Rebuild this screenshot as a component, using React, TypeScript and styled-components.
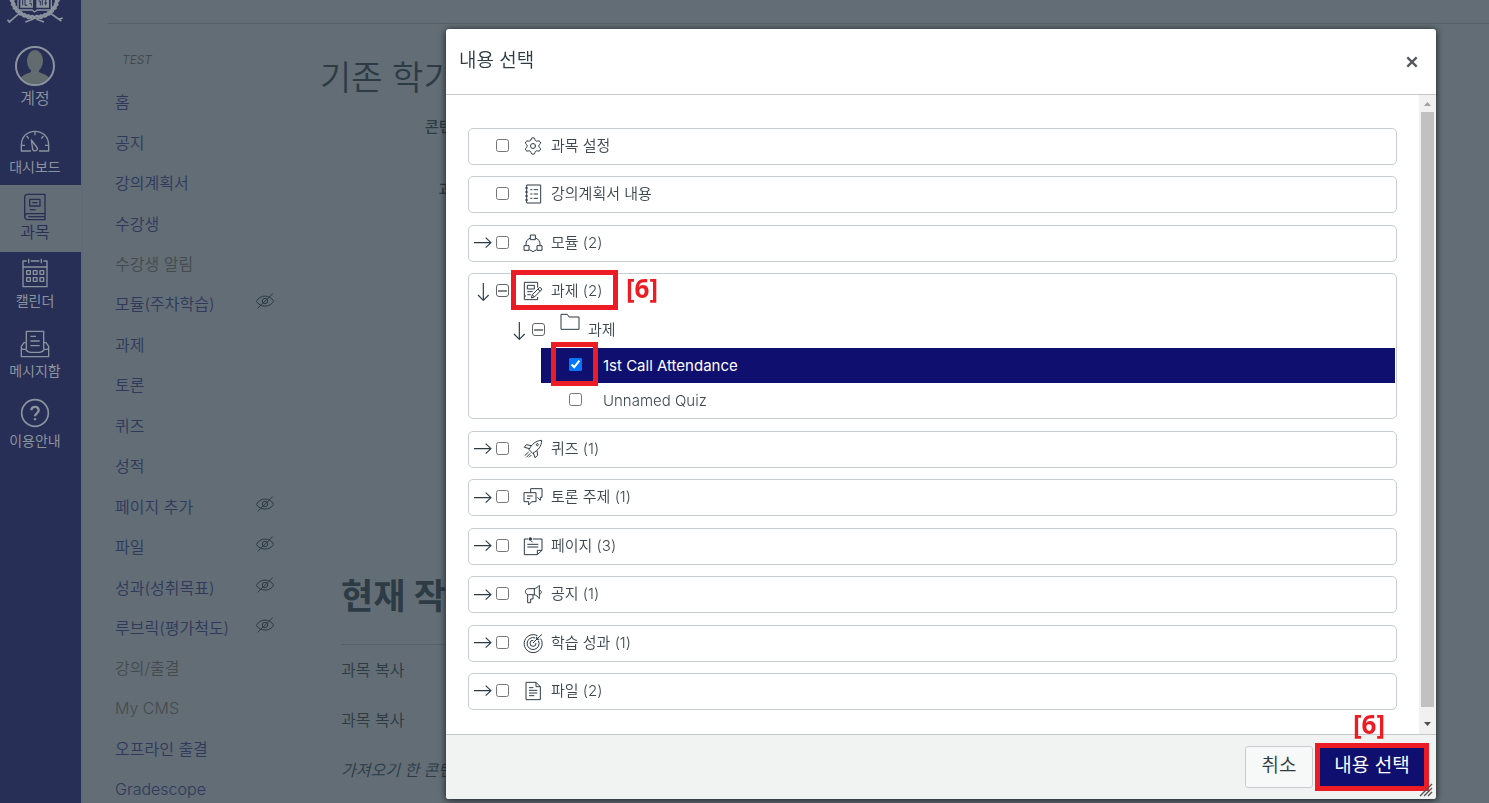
import React, { useEffect, useRef, useState } from 'react';
import styled, { createGlobalStyle, css } from 'styled-components';
import { Settings } from 'lucide-react';

const SANS = `Inter, "Noto Sans CJK KR", sans-serif`;

const color = {
  dim: '#626d75',
  navy: '#272f57',
  navIcon: '#8b949d',
  ink: '#2d3b45',
  link: '#2e395c',
  muted: '#444b4e',
  line: '#c7cdd1',
  primary: '#0f0f70',
  mark: '#ed1c24',
};

const GlobalStyle = createGlobalStyle`
  *, *::before, *::after { box-sizing: border-box; }
  body {
    margin: 0;
    background: ${color.dim};
    font-family: ${SANS};
    font-size: 16px;
    font-weight: 350;
    color: ${color.ink};
  }
  ul, h1, h2, p { margin: 0; padding: 0; list-style: none; }
  a { color: inherit; text-decoration: none; }
`;

/* ---------- icons ---------- */

type GlyphProps = { w: number; h: number; sw?: number; children: React.ReactNode };

/* Icons are drawn on a grid three times finer than their display size. */
const Glyph = ({ w, h, sw = 3, children }: GlyphProps) => (
  <svg
    width={w}
    height={h}
    viewBox={`0 0 ${w * 3} ${h * 3}`}
    fill="none"
    stroke="currentColor"
    strokeWidth={sw}
    strokeLinejoin="round"
    aria-hidden="true"
  >
    {children}
  </svg>
);

const ArrowRight = () => (
  <Glyph w={20} h={12} sw={3.5}>
    <path d="M3 17H54M38 2L54 17L38 32" />
  </Glyph>
);
const ArrowDown = () => (
  <Glyph w={20} h={20} sw={3.5}>
    <path d="M31 3V55M15 39L31 55L47 39" />
  </Glyph>
);
const SyllabusIcon = () => (
  <Glyph w={20} h={20}>
    <path d="M11 3H53V57H11ZM6 12H15M6 24H15M6 36H15M6 48H15" />
    <path d="M22 17H28M22 30H28M22 43H28M32 17H45M32 30H45M32 43H45" />
  </Glyph>
);
const ModuleIcon = () => (
  <Glyph w={20} h={20}>
    <path d="M22 6H37V20H22ZM3 38H18V52H3ZM42 38H57V52H42Z" />
    <path d="M22 15C13 18 8 26 9 37M37 15C47 18 52 26 51 37M19 50L30 56L41 50" />
  </Glyph>
);
const AssignmentIcon = () => (
  <Glyph w={20} h={20}>
    <path d="M44 20V4H4V56H44V48M4 45H9" />
    <path d="M13 13H34V24H13ZM13 32H29M13 41H23" />
    <path d="M28 41L49 20C52 18 58 23 55 27L34 48L25 51ZM45 24L51 31M28 41L34 48" />
  </Glyph>
);
const FolderIcon = () => (
  <Glyph w={20} h={18}>
    <path d="M3 49V4H22L27 12H57V49Z" />
  </Glyph>
);
const QuizIcon = () => (
  <Glyph w={20} h={20}>
    <path d="M18 32C26 16 38 5 56 4C56 21 46 34 29 43Z" />
    <path d="M25 20L10 17L4 25L20 29M42 35L44 49L36 56L31 42" />
    <circle cx="43" cy="17" r="3" />
    <path d="M17 39L5 50M22 43L10 55M25 48L18 55" />
  </Glyph>
);
const DiscussionIcon = () => (
  <Glyph w={20} h={20}>
    <path d="M23 17V5H57V31H52V40L43 31" />
    <path d="M3 17H39V44H26L17 54V44H3ZM12 27H29M12 35H22" />
  </Glyph>
);
const PageIcon = () => (
  <Glyph w={20} h={20}>
    <path d="M16 9H4V56H43L57 43V9H29M43 56V43H57" />
    <path d="M13 25H46M13 33H46M24 14L29 19" />
    <circle cx="22" cy="9" r="5" fill="currentColor" stroke="none" />
  </Glyph>
);
const AnnouncementIcon = () => (
  <Glyph w={20} h={20}>
    <path d="M17 14H33C40 13 45 9 49 4V44C45 39 40 33 33 32H17C4 32 4 14 17 14Z" />
    <path d="M34 14V32M14 32V56H23V45H30V33M49 18C57 20 57 29 49 31" />
  </Glyph>
);
const OutcomeIcon = () => (
  <Glyph w={20} h={20}>
    <path d="M43 8A27 27 0 1 0 53 17" />
    <path d="M37 15A18 18 0 1 0 46 23" />
    <path d="M31 22A9 9 0 1 0 39 30" />
    <path d="M30 30L49 11M57 4L49 11M41 11V19H49M41 19L49 11" />
  </Glyph>
);
const FileIcon = () => (
  <Glyph w={20} h={20}>
    <path d="M9 4H39L52 17V56H9ZM39 4V17H52" />
    <path d="M18 20H31M18 28H43M18 36H43M18 44H34" />
  </Glyph>
);
const HiddenIcon = () => (
  <Glyph w={18} h={16}>
    <path d="M1 25C12 4 42 4 53 25C42 44 12 44 1 25Z" />
    <circle cx="27" cy="24" r="8" />
    <path d="M50 2L5 46" />
  </Glyph>
);

/* Laurel leaves sit on an arc around the open book. */
const leaves = Array.from({ length: 17 }, (_, i) => 2 + i * 11);

const Crest = () => (
  <svg width="58" height="24" viewBox="0 0 174 72" fill="none" stroke={color.navIcon} aria-hidden="true">
    {leaves.map((deg) => {
      const rad = (deg * Math.PI) / 180;
      const x = Math.round(86 + 68 * Math.cos(rad));
      const y = Math.round(-6 + 58 * Math.sin(rad));
      const lean = deg < 90 ? 38 : -38;
      return (
        <g key={deg} fill={color.navIcon} stroke="none">
          <ellipse cx={x} cy={y} rx="11" ry="4" transform={`rotate(${deg + 90 + lean} ${x} ${y})`} />
          <ellipse cx={x} cy={y} rx="9" ry="3" transform={`rotate(${deg + 90 - lean} ${x} ${y})`} />
        </g>
      );
    })}
    <path d="M36 -2V30H78L86 36L94 30H136V-2" strokeWidth="4" fill={color.navy} />
    <path d="M43 -2H81V23H43ZM91 -2H129V23H91Z" stroke="none" fill={color.navIcon} />
    <path d="M50 0V16M57 0V16H64M70 3H76M70 10H76V17M97 3H103V16M109 0V16M115 9H123M119 0V16" strokeWidth="3" stroke={color.navy} />
    <path d="M8 68L44 36M128 36L166 63M4 60L14 66M158 58L170 54" strokeWidth="5" />
    <path d="M58 66L80 58M92 58L114 66" strokeWidth="5" />
  </svg>
);
const AvatarIcon = () => (
  <svg width="42" height="42" viewBox="0 0 42 42" aria-hidden="true">
    <clipPath id="avatar"><circle cx="21" cy="21" r="18" /></clipPath>
    <g clipPath="url(#avatar)" fill="#626b6e">
      <ellipse cx="21" cy="16" rx="8" ry="11" />
      <path d="M3 42C3 31 13 29 17 27V22H25V27C29 29 39 31 39 42Z" />
    </g>
    <circle cx="21" cy="21" r="19" fill="none" stroke={color.navIcon} strokeWidth="2" />
  </svg>
);
const DashboardIcon = () => (
  <Glyph w={30} h={24} sw={4}>
    <path d="M33 63H4V46C4 20 22 4 45 4C68 4 86 20 86 46V63H57" />
    <path d="M34 30L38 58C42 66 54 62 52 54ZM45 5V16M20 18L26 26M70 18L64 26M5 46H15M75 46H85" />
  </Glyph>
);
const CourseIcon = () => (
  <Glyph w={24} h={28} sw={4}>
    <path d="M66 62V4H14C8 4 5 8 5 14V70C5 76 8 80 14 80H66V62H14C8 62 5 65 5 71M66 71H16" />
    <path d="M20 19H51V39H20ZM28 29H43M20 50H38" />
  </Glyph>
);
const CalendarIcon = () => (
  <Glyph w={26} h={30} sw={4}>
    <path d="M14 9H3V86H75V9H64M26 9H52M3 27H75M20 2V16M58 2V16" />
    <path d="M14 38H25V49H14ZM34 38H45V49H34ZM54 38H65V49H54ZM14 59H25V70H14ZM34 59H45V70H34ZM54 59H65V70H54Z" />
  </Glyph>
);
const InboxIcon = () => (
  <Glyph w={30} h={28} sw={4}>
    <path d="M19 58V4H71V58M31 19H48M31 33H59M31 47H59" />
    <path d="M19 38H12L4 49V80H86V49L78 38H71M4 52C4 58 8 58 17 58C21 64 26 67 32 67H58C64 67 69 64 73 58C82 58 86 58 86 52" />
  </Glyph>
);
const HelpIcon = () => (
  <Glyph w={30} h={30} sw={5}>
    <circle cx="45" cy="45" r="40" />
    <path d="M34 37C34 23 56 23 56 37C56 46 45 46 45 55M45 61V67" strokeWidth={7} />
  </Glyph>
);

/* ---------- page behind the dialog ---------- */

const Shell = styled.div`
  display: flex;
  height: 100vh;
  overflow: hidden;
`;

const GlobalNav = styled.nav`
  flex: 0 0 81px;
  background: ${color.navy};
`;

const Brand = styled.a`
  display: block;
  height: 36px;
  padding-left: 6px;
`;

const NavLink = styled.a<{ $active?: boolean; $height: number; $large?: boolean }>`
  display: flex;
  flex-direction: column;
  align-items: center;
  justify-content: flex-end;
  height: ${(p) => p.$height}px;
  padding: 0 11px ${(p) => (p.$large ? 10 : 8)}px 0;
  gap: ${(p) => (p.$large ? 1 : 3)}px;
  color: ${(p) => (p.$active ? color.navy : color.navIcon)};
  background: ${(p) => (p.$active ? color.dim : 'transparent')};
  font-size: ${(p) => (p.$large ? 16 : 14)}px;
  font-weight: ${(p) => (p.$large ? 350 : 400)};
  line-height: 20px;
  white-space: nowrap;
`;

const Page = styled.div`
  flex: 1;
  min-width: 0;
  border-left: 2px solid #5f6b7a;
`;

const TopRule = styled.header`
  height: 24px;
  margin-left: 25px;
  border-bottom: 1px solid #54606b;
`;

const Columns = styled.div`
  display: flex;
`;

const CourseNav = styled.nav`
  flex: 0 0 237px;
  padding: 0 46px 0 32px;
`;

const Term = styled.p`
  padding: 26px 7px 11px;
  font-size: 12px;
  font-style: italic;
  line-height: 20px;
  color: #3c4347;
`;

const CourseList = styled.ul`
  display: grid;
  grid-auto-rows: 1fr;
  min-height: 728px;
`;

const CourseItem = styled.li<{ $muted?: boolean }>`
  display: flex;
  align-items: center;
  justify-content: space-between;
  white-space: nowrap;
  color: ${(p) => (p.$muted ? color.muted : color.link)};

  svg { flex: none; margin-bottom: 4px; color: ${color.ink}; }
`;

const Main = styled.main`
  flex: 1;
  min-width: 0;
  padding-top: 30px;
`;

const Title = styled.h1`
  font-size: 34px;
  font-weight: 350;
  line-height: 48px;
  white-space: nowrap;
`;

const Form = styled.div`
  display: flex;
  flex-direction: column;
  gap: 43px;
  min-height: 470px;
  padding-top: 15px;
`;

const FieldName = styled.span`
  width: 178px;
  font-size: 15px;
  font-weight: 500;
  line-height: 20px;
  text-align: right;
`;

const Jobs = styled.section`
  margin: 0 72px 0 21px;
  white-space: nowrap;
`;

const JobsTitle = styled.h2`
  padding-bottom: 24px;
  border-bottom: 1px solid #54606b;
  font-size: 35px;
  font-weight: 700;
  line-height: 48px;
`;

const Job = styled.li<{ $note?: boolean }>`
  line-height: 50px;
  font-style: ${(p) => (p.$note ? 'italic' : 'normal')};
`;

/* ---------- dialog ---------- */

const Dialog = styled.div`
  position: fixed;
  inset: 29px 53px 4px 446px;
  display: flex;
  flex-direction: column;
  border-radius: 3px;
  background: #fff;
  box-shadow: 0 1px 7px rgba(0, 0, 0, 0.75);
`;

const DialogHead = styled.div`
  display: flex;
  align-items: center;
  justify-content: space-between;
  height: 66px;
  padding: 0 16px 2px 13px;
  border-bottom: 1px solid #c6c9cb;
`;

const DialogTitle = styled.h2`
  font-size: 19px;
  font-weight: 350;
  line-height: 24px;
`;

const CloseButton = styled.button`
  display: flex;
  padding: 2px;
  margin-top: 2px;
  border: 0;
  background: none;
  color: #55595c;
`;

const DialogBody = styled.div`
  display: flex;
  flex: 1;
  min-height: 0;
`;

const Tree = styled.ul`
  display: flex;
  flex: 1;
  flex-direction: column;
  justify-content: space-between;
  margin: 33px 22px 24px;
`;

const Card = styled.li`
  border: 1px solid ${color.line};
  border-radius: 5px;
  font-size: 15px;
  color: #3d474f;
`;

const Row = styled.div<{ $level?: number }>`
  position: relative;
  display: flex;
  align-items: center;
  height: ${(p) => (p.$level ? 39 : 35)}px;
  padding-left: ${(p) => (p.$level ? 40 : 4)}px;
  padding-top: ${(p) => (p.$level ? 4 : 0)}px;
`;

const Toggle = styled.button`
  display: flex;
  width: 20px;
  padding: 0;
  margin-right: 3px;
  border: 0;
  background: none;
  color: ${color.ink};
`;

const Spacer = styled.span`
  width: 23px;
`;

const Check = styled.input`
  flex: none;
  width: 13px;
  height: 13px;
  margin: 0 0 2px;

  ${(p) =>
    p['aria-checked'] === 'mixed' &&
    css`
      display: grid;
      place-items: center;
      appearance: none;
      border: 1px solid #606468;
      border-radius: 3px;

      &::after {
        content: '';
        width: 9px;
        height: 2px;
        background: #85888b;
      }
    `}
`;

const RowLabel = styled.label`
  display: flex;
  align-items: center;
  gap: 8px;
  margin-left: 14px;
  padding-bottom: 1px;
  line-height: 20px;
  white-space: nowrap;

  svg { flex: none; color: ${color.ink}; }
`;

const FolderLabel = styled(RowLabel)`
  margin-left: 15px;

  svg { margin-bottom: 16px; }
`;

const Leaf = styled.li<{ $selected?: boolean }>`
  position: relative;
  display: flex;
  align-items: center;
  gap: 21px;
  height: 35px;
  margin: 0 1px 0 72px;
  padding-left: 28px;
  background: ${(p) => (p.$selected ? color.primary : 'transparent')};
  color: ${(p) => (p.$selected ? '#fff' : 'inherit')};
  font-weight: ${(p) => (p.$selected ? 400 : 350)};
`;

/* Red marks that point out the steps of the guide. */
const Callout = styled.span`
  position: absolute;
  inset: -4px;
  border: 5px solid ${color.mark};
  pointer-events: none;
`;

const CheckCallout = styled(Callout)`
  inset: -6px auto -3px 10px;
  width: 47px;
`;

const AssignmentCallout = styled(Callout)`
  inset: -4px auto -1px 42px;
  width: 107px;
`;

const Step = styled.span`
  position: absolute;
  top: 0;
  left: 157px;
  font-family: "Noto Sans", sans-serif;
  font-size: 26px;
  font-weight: 700;
  line-height: 28px;
  color: ${color.mark};
`;

const ButtonStep = styled(Step)`
  top: -37px;
  left: 34px;
`;

const ScrollTrack = styled.div`
  display: flex;
  flex-direction: column;
  align-items: center;
  width: 17px;
  background: #f1f1f1;
`;

const ScrollThumb = styled.div`
  flex: 1;
  width: 13px;
  margin-bottom: 10px;
  background: #c1c1c1;
`;

const ScrollArrow = styled.svg`
  display: block;
  width: 17px;
  height: 17px;
`;

const DialogFoot = styled.div`
  position: relative;
  display: flex;
  justify-content: flex-end;
  gap: 5px;
  height: 65px;
  padding: 11px 10px;
  border-top: 1px solid #c6c9cb;
  border-radius: 0 0 3px 3px;
  background: #f1f2f2;
`;

const Button = styled.button<{ $primary?: boolean }>`
  position: relative;
  width: ${(p) => (p.$primary ? 108 : 68)}px;
  height: 42px;
  padding: 0 0 7px;
  border: 1px solid ${(p) => (p.$primary ? color.primary : color.line)};
  border-radius: 3px;
  background: ${(p) => (p.$primary ? color.primary : '#f7f8f8')};
  color: ${(p) => (p.$primary ? '#fff' : color.ink)};
  font-family: inherit;
  font-size: 19px;
  font-weight: ${(p) => (p.$primary ? 400 : 350)};
  white-space: nowrap;
`;

const Grip = styled.svg`
  position: absolute;
  right: 3px;
  bottom: 2px;
`;

const courseMenu = [
  { text: '홈' },
  { text: '공지' },
  { text: '강의계획서' },
  { text: '수강생' },
  { text: '수강생 알림', muted: true },
  { text: '모듈(주차학습)', hidden: true },
  { text: '과제' },
  { text: '토론' },
  { text: '퀴즈' },
  { text: '성적' },
  { text: '페이지 추가', hidden: true },
  { text: '파일', hidden: true },
  { text: '성과(성취목표)', hidden: true },
  { text: '루브릭(평가척도)', hidden: true },
  { text: '강의/출결', muted: true },
  { text: 'My CMS', muted: true },
  { text: '오프라인 출결' },
  { text: 'Gradescope' },
];

const content = [
  { id: 'settings', text: '과목 설정', icon: <Settings size={20} strokeWidth={1.2} />, leaf: true },
  { id: 'syllabus', text: '강의계획서 내용', icon: <SyllabusIcon />, leaf: true },
  { id: 'modules', text: '모듈 (2)', icon: <ModuleIcon /> },
  { id: 'assignments', text: '과제 (2)', icon: <AssignmentIcon />, open: true },
  { id: 'quizzes', text: '퀴즈 (1)', icon: <QuizIcon /> },
  { id: 'discussions', text: '토론 주제 (1)', icon: <DiscussionIcon /> },
  { id: 'pages', text: '페이지 (3)', icon: <PageIcon /> },
  { id: 'announcements', text: '공지 (1)', icon: <AnnouncementIcon /> },
  { id: 'outcomes', text: '학습 성과 (1)', icon: <OutcomeIcon /> },
  { id: 'files', text: '파일 (2)', icon: <FileIcon /> },
];

const MixedCheck = ({ id }: { id: string }) => {
  const ref = useRef<HTMLInputElement>(null);
  useEffect(() => {
    if (ref.current) ref.current.indeterminate = true;
  }, []);
  return <Check ref={ref} id={id} type="checkbox" aria-checked="mixed" />;
};

const AssignmentTree = () => {
  const [attendance, setAttendance] = useState(true);
  return (
    <>
      <Row $level={1}>
        <Toggle type="button" aria-label="접기"><ArrowDown /></Toggle>
        <MixedCheck id="group" />
        <FolderLabel htmlFor="group"><FolderIcon />과제</FolderLabel>
      </Row>
      <ul>
        <Leaf $selected={attendance}>
          <Check id="attendance" type="checkbox" checked={attendance} onChange={(e) => setAttendance(e.target.checked)} />
          <label htmlFor="attendance">1st Call Attendance</label>
          <CheckCallout />
        </Leaf>
        <Leaf>
          <Check id="quiz" type="checkbox" />
          <label htmlFor="quiz">Unnamed Quiz</label>
        </Leaf>
      </ul>
    </>
  );
};

export default function App() {
  return (
    <>
      <GlobalStyle />
      <Shell>
        <GlobalNav>
          <Brand href="#" aria-label="홈"><Crest /></Brand>
          <NavLink href="#" $height={82} $large><AvatarIcon />계정</NavLink>
          <NavLink href="#" $height={67}><DashboardIcon />대시보드</NavLink>
          <NavLink href="#" $height={67} $active $large><CourseIcon />과목</NavLink>
          <NavLink href="#" $height={67}><CalendarIcon />캘린더</NavLink>
          <NavLink href="#" $height={70}><InboxIcon />메시지함</NavLink>
          <NavLink href="#" $height={70}><HelpIcon />이용안내</NavLink>
        </GlobalNav>
        <Page>
          <TopRule />
          <Columns>
            <CourseNav>
              <Term>TEST</Term>
              <CourseList>
                {courseMenu.map((m) => (
                  <CourseItem key={m.text} $muted={m.muted}>
                    <a href="#">{m.text}</a>
                    {m.hidden && <HiddenIcon />}
                  </CourseItem>
                ))}
              </CourseList>
            </CourseNav>
            <Main>
              <Title>기존 학기</Title>
              <Form>
                <FieldName>콘텐츠 유형</FieldName>
                <FieldName>과목 검색</FieldName>
              </Form>
              <Jobs>
                <JobsTitle>현재 작업</JobsTitle>
                <ul>
                  <Job>과목 복사</Job>
                  <Job>과목 복사</Job>
                  <Job $note>가져오기 한 콘텐츠</Job>
                </ul>
              </Jobs>
            </Main>
          </Columns>
        </Page>
      </Shell>

      <Dialog role="dialog" aria-labelledby="dialog-title">
        <DialogHead>
          <DialogTitle id="dialog-title">내용 선택</DialogTitle>
          <CloseButton type="button" aria-label="닫기">
            <Glyph w={12} h={12} sw={7}><path d="M4 4L32 32M32 4L4 32" /></Glyph>
          </CloseButton>
        </DialogHead>
        <DialogBody>
          <Tree>
            {content.map((c) => (
              <Card key={c.id}>
                <Row>
                  {c.leaf ? (
                    <Spacer />
                  ) : (
                    <Toggle type="button" aria-label={c.open ? '접기' : '펼치기'}>
                      {c.open ? <ArrowDown /> : <ArrowRight />}
                    </Toggle>
                  )}
                  {c.open ? <MixedCheck id={c.id} /> : <Check id={c.id} type="checkbox" />}
                  <RowLabel htmlFor={c.id}>{c.icon}{c.text}</RowLabel>
                  {c.open && (
                    <>
                      <AssignmentCallout />
                      <Step>[6]</Step>
                    </>
                  )}
                </Row>
                {c.open && <AssignmentTree />}
              </Card>
            ))}
          </Tree>
          <ScrollTrack aria-hidden="true">
            <ScrollArrow viewBox="0 0 17 17"><path d="M5 11L8.500 7L12 11Z" fill="#a3a3a3" /></ScrollArrow>
            <ScrollThumb />
            <ScrollArrow viewBox="0 0 17 17"><path d="M5 5L8.500 9L12 5Z" fill="#505050" /></ScrollArrow>
          </ScrollTrack>
        </DialogBody>
        <DialogFoot>
          <Button type="button">취소</Button>
          <Button type="button" $primary>
            내용 선택
            <Callout />
            <ButtonStep>[6]</ButtonStep>
          </Button>
          <Grip width="14" height="14" viewBox="0 0 14 14" stroke="#555" strokeWidth="1.400" aria-hidden="true">
            <path d="M1 13L13 1M5 13L13 5M9 13L13 9" />
          </Grip>
        </DialogFoot>
      </Dialog>
    </>
  );
}
